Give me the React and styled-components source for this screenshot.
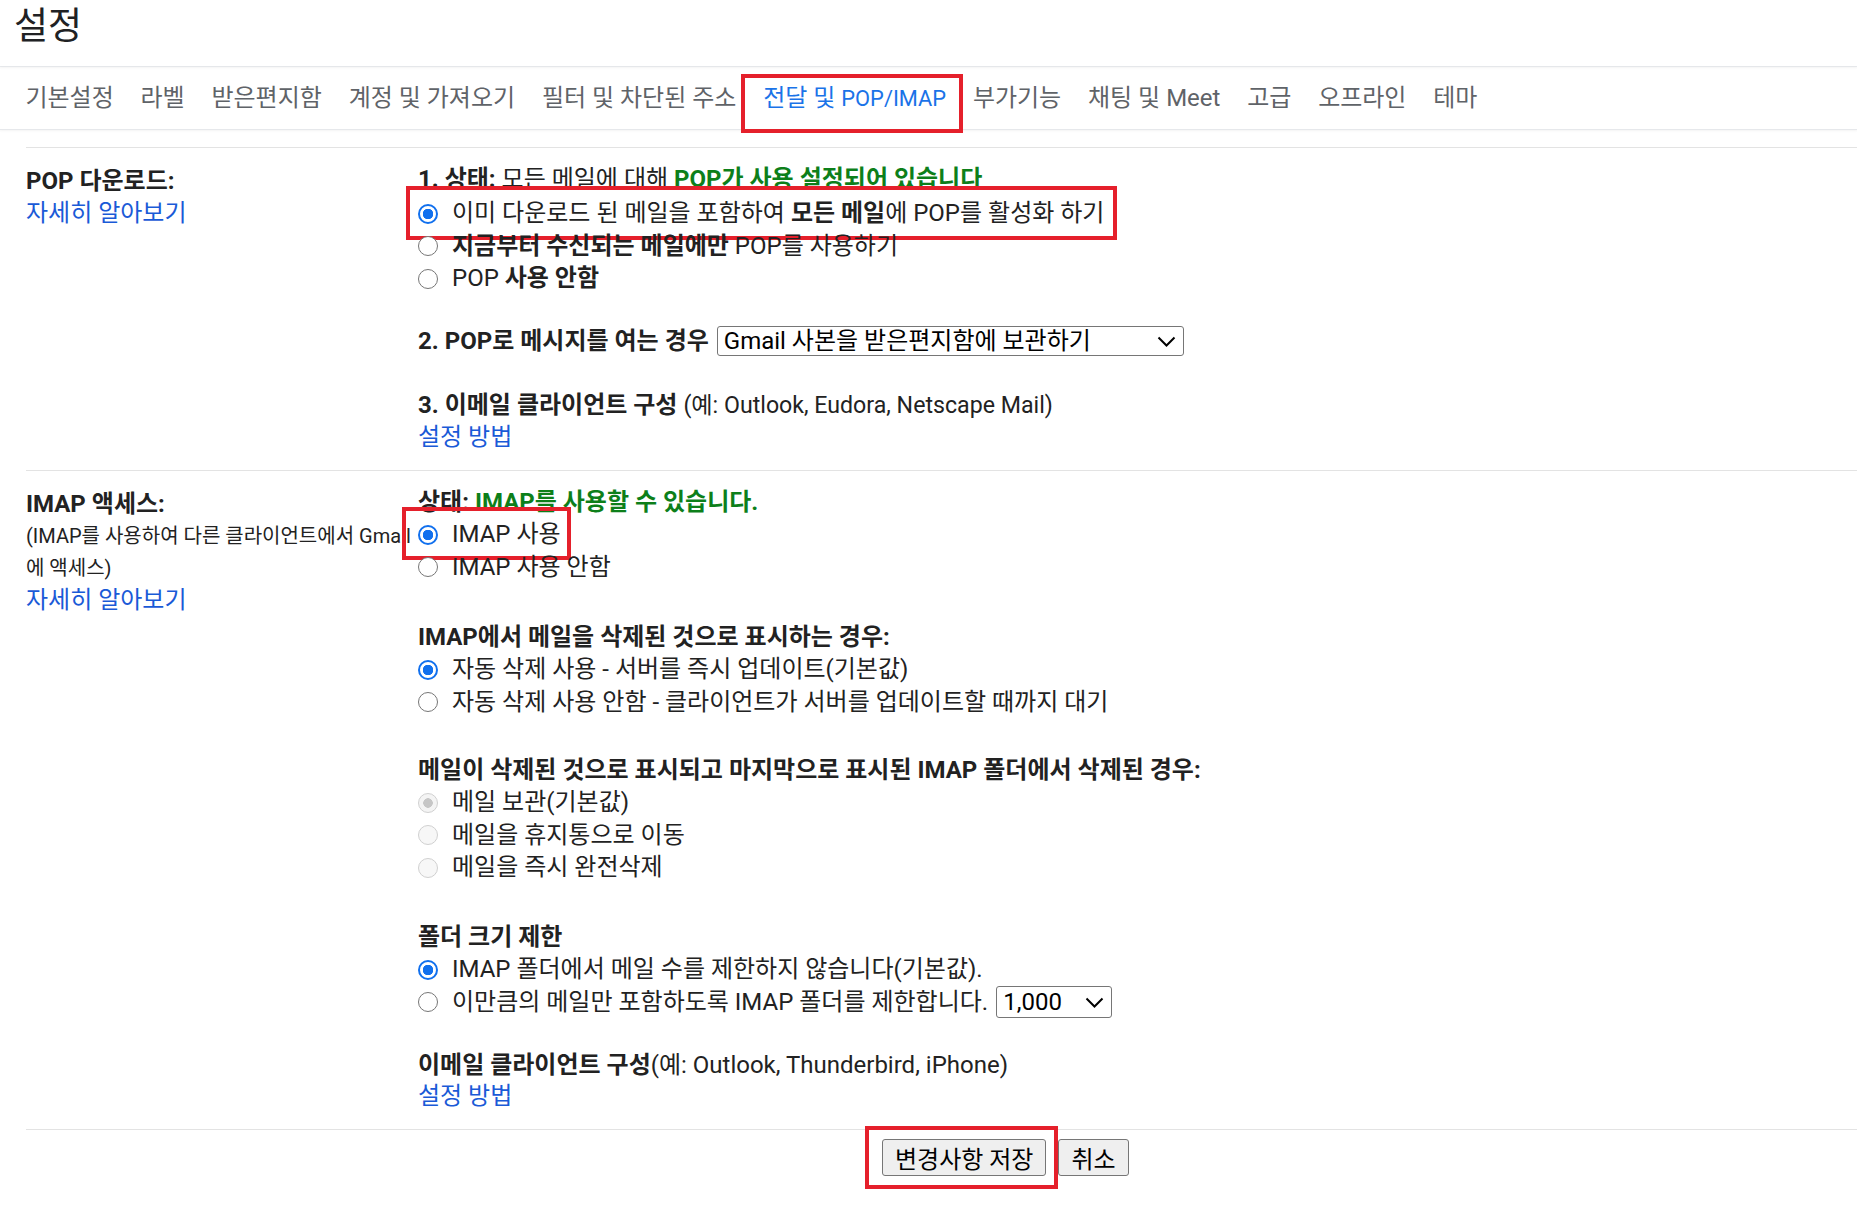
import styled, { createGlobalStyle } from 'styled-components'

const GlobalStyle = createGlobalStyle`
  html, body {
    margin: 0;
    padding: 0;
    background: #fff;
  }
  body {
    font-family: Roboto, "Noto Sans CJK KR", sans-serif;
    color: #222;
  }
`

const Page = styled.div`
  min-height: 1210px;
`

const Header = styled.header`
  height: 67px;
  box-sizing: border-box;
  padding-left: 14px;
  border-bottom: 1px solid #e6e8eb;
  box-shadow: 0 1px 2px rgba(60, 64, 67, 0.06);
`

const Title = styled.h1`
  margin: 0;
  font-size: 37px;
  font-weight: 400;
  line-height: 54px;
  color: #202124;
`

const TabBar = styled.nav`
  display: flex;
  height: 63px;
  box-sizing: border-box;
  padding-left: 12px;
  border-bottom: 1px solid #e6e8eb;
  box-shadow: 0 1px 2px rgba(60, 64, 67, 0.06);
`

const Tab = styled.div`
  position: relative;
  padding: 0 13.4px;
  font-size: 24px;
  line-height: 62px;
  white-space: nowrap;
  color: ${p => (p.$active ? '#1a73e8' : '#5f6368')};
`

// Latin runs render a bit narrower than the hangul around them
const Latin = styled.span`
  font-size: ${p => p.$scale || 0.91}em;
`

const Highlight = styled.span`
  position: absolute;
  inset: ${p => p.$inset};
  border: 4px solid #e5202b;
  pointer-events: none;
`

const Table = styled.div`
  margin: 17px 0 0 26px;
  border-top: 1px solid #e3e3e3;
`

const Section = styled.section`
  display: grid;
  grid-template-columns: 392px 1fr;
  padding: ${p => p.$pt}px 0 17px;
  border-bottom: 1px solid #e3e3e3;
`

const LabelCol = styled.div`
  padding-top: 2px;
  line-height: 32px;
`

const SectionLabel = styled.div`
  font-size: 24px;
  font-weight: 700;
`

const Note = styled.div`
  font-size: 20px;
  white-space: nowrap;
`

const Link = styled.a`
  display: block;
  font-size: 24px;
  color: #1a5ad7;
  text-decoration: none;
  width: fit-content;
`

const Content = styled.div`
  display: flex;
  flex-direction: column;
  line-height: 31px;
`

const Block = styled.div`
  margin-top: ${p => p.$mt || 0}px;
`

const Line = styled.div`
  display: flex;
  align-items: center;
  gap: 8px;
  margin-bottom: ${p => p.$mb || 0}px;
  font-size: 24px;
  line-height: 32.5px;
  white-space: nowrap;
`

const Bold = styled.b`
  font-weight: 700;
  color: ${p => (p.$green ? '#0d7f1a' : '#222')};
`

const RadioRow = styled.label`
  position: relative;
  display: flex;
  align-items: center;
  gap: 14px;
  width: fit-content;
  height: 32.5px;
  font-size: 24px;
  white-space: nowrap;
`

const Radio = styled.span`
  flex: none;
  width: 20px;
  height: 20px;
  box-sizing: border-box;
  border-radius: 50%;
  border: ${p =>
    p.$disabled
      ? '1.5px solid #d0d0d0'
      : p.$checked
        ? '2px solid #1170ee'
        : '1.5px solid #767676'};
  background: ${p =>
    p.$checked
      ? p.$disabled
        ? 'radial-gradient(circle, #c6c6c6 0 4.5px, #f4f4f4 5px)'
        : 'radial-gradient(circle, #1170ee 0 5px, #fff 5.5px)'
      : p.$disabled
        ? '#f7f7f7'
        : '#fff'};
`

const SelectBox = styled.div`
  display: inline-flex;
  align-items: center;
  justify-content: space-between;
  box-sizing: border-box;
  width: ${p => p.$w}px;
  height: ${p => p.$h}px;
  padding: 0 7px 0 6px;
  border: 1px solid #767676;
  border-radius: 3px;
  font-size: 24px;
  font-weight: 400;
  color: #000;
  background: #fff;
`

const Footer = styled.div`
  display: flex;
  gap: 12px;
  padding: 9px 0 0 856px;
`

const ButtonWrap = styled.span`
  position: relative;
  display: inline-flex;
`

const Button = styled.button`
  height: 37px;
  padding: 0 12px;
  font-family: inherit;
  font-size: 24px;
  color: #000;
  background: #efefef;
  border: 1px solid #767676;
  border-radius: 3px;
`

function Chevron() {
  return (
    <svg width="19" height="11" viewBox="0 0 19 11">
      <path d="M1.5 1.5l8 8 8-8" fill="none" stroke="#000" strokeWidth="2" />
    </svg>
  )
}

function Mixed({ text }) {
  return text
    .split(/([A-Z/]{2,})/)
    .map((part, i) => (/[A-Z]{2,}/.test(part) ? <Latin key={i}>{part}</Latin> : part))
}

function Option({ checked, disabled, children, mark }) {
  return (
    <RadioRow>
      <Radio $checked={checked} $disabled={disabled} />
      <span>{children}</span>
      {mark && <Highlight $inset={mark} />}
    </RadioRow>
  )
}

const tabs = [
  '기본설정',
  '라벨',
  '받은편지함',
  '계정 및 가져오기',
  '필터 및 차단된 주소',
  '전달 및 POP/IMAP',
  '부가기능',
  '채팅 및 Meet',
  '고급',
  '오프라인',
  '테마',
]

const activeTab = '전달 및 POP/IMAP'

export default function App() {
  return (
    <Page>
      <GlobalStyle />
      <Header>
        <Title>설정</Title>
      </Header>
      <TabBar>
        {tabs.map(t => (
          <Tab key={t} $active={t === activeTab}>
            <Mixed text={t} />
            {t === activeTab && <Highlight $inset="7px -4px -4px -9px" />}
          </Tab>
        ))}
      </TabBar>
      <Table>
        <Section $pt={15}>
          <LabelCol>
            <SectionLabel>POP 다운로드:</SectionLabel>
            <Link>자세히 알아보기</Link>
          </LabelCol>
          <Content>
            <Block>
              <Line $mb={2}>
                <span>
                  <Bold>1. 상태:</Bold> 모든 메일에 대해 <Bold $green>POP가 사용 설정되어 있습니다</Bold>
                </span>
              </Line>
              <Option checked mark="-12px -13px -10px -12px">
                이미 다운로드 된 메일을 포함하여 <Bold>모든 메일</Bold>에 POP를 활성화 하기
              </Option>
              <Option>
                <Bold>지금부터 수신되는 메일에만</Bold> POP를 사용하기
              </Option>
              <Option>
                POP <Bold>사용 안함</Bold>
              </Option>
            </Block>
            <Block $mt={30}>
              <Line>
                <Bold>2. POP로 메시지를 여는 경우</Bold>
                <SelectBox $w={467} $h={30}>
                  Gmail 사본을 받은편지함에 보관하기
                  <Chevron />
                </SelectBox>
              </Line>
            </Block>
            <Block $mt={31}>
              <Line>
                <span>
                  <Bold>3. 이메일 클라이언트 구성</Bold>{' '}
                  <Latin $scale={0.965}>(예: Outlook, Eudora, Netscape Mail)</Latin>
                </span>
              </Line>
              <Link>설정 방법</Link>
            </Block>
          </Content>
        </Section>

        <Section $pt={15}>
          <LabelCol>
            <SectionLabel>IMAP 액세스:</SectionLabel>
            <Note>
              (IMAP를 사용하여 다른 클라이언트에서 Gmail
              <br />에 액세스)
            </Note>
            <Link>자세히 알아보기</Link>
          </LabelCol>
          <Content>
            <Block>
              <Line>
                <span>
                  <Bold>상태: </Bold>
                  <Bold $green>IMAP를 사용할 수 있습니다.</Bold>
                </span>
              </Line>
              <Option checked mark="-12px -10px -9px -16px">
                IMAP 사용
              </Option>
              <Option>IMAP 사용 안함</Option>
            </Block>
            <Block $mt={37.5}>
              <Line>
                <Bold>IMAP에서 메일을 삭제된 것으로 표시하는 경우:</Bold>
              </Line>
              <Option checked>자동 삭제 사용 - 서버를 즉시 업데이트(기본값)</Option>
              <Option>자동 삭제 사용 안함 - 클라이언트가 서버를 업데이트할 때까지 대기</Option>
            </Block>
            <Block $mt={35.5}>
              <Line>
                <Bold>메일이 삭제된 것으로 표시되고 마지막으로 표시된 IMAP 폴더에서 삭제된 경우:</Bold>
              </Line>
              <Option checked disabled>
                메일 보관(기본값)
              </Option>
              <Option disabled>메일을 휴지통으로 이동</Option>
              <Option disabled>메일을 즉시 완전삭제</Option>
            </Block>
            <Block $mt={37}>
              <Line>
                <Bold>폴더 크기 제한</Bold>
              </Line>
              <Option checked>IMAP 폴더에서 메일 수를 제한하지 않습니다(기본값).</Option>
              <RadioRow>
                <Radio />
                <Line>
                  이만큼의 메일만 포함하도록 IMAP 폴더를 제한합니다.
                  <SelectBox $w={116} $h={32}>
                    1,000
                    <Chevron />
                  </SelectBox>
                </Line>
              </RadioRow>
            </Block>
            <Block $mt={30}>
              <Line>
                <span>
                  <Bold>이메일 클라이언트 구성</Bold>(예: Outlook, Thunderbird, iPhone)
                </span>
              </Line>
              <Link>설정 방법</Link>
            </Block>
          </Content>
        </Section>

        <Footer>
          <ButtonWrap>
            <Button>변경사항 저장</Button>
            <Highlight $inset="-13px -12px -13px -17px" />
          </ButtonWrap>
          <Button>취소</Button>
        </Footer>
      </Table>
    </Page>
  )
}
